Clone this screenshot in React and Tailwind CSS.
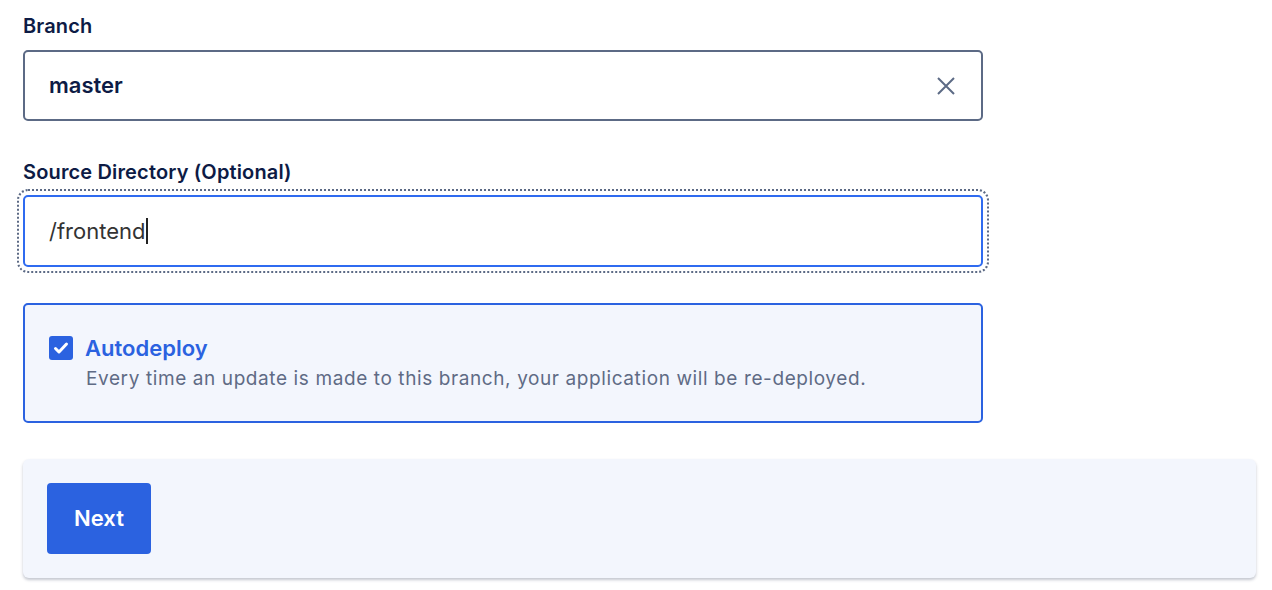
import React from 'react';

export default function App() {
  return (
    <div className="bg-white w-[1272px] h-[590px] px-[23px] pt-[12px] font-['Inter',sans-serif]">
      <div className="w-[960px]">
        <label className="block text-[20px] font-semibold text-[#0d1b45] leading-[28px] tracking-[0.15px] mb-[10px]">Branch</label>
        <div className="h-[71px] border-2 border-[#5c6a85] rounded-[5px] flex items-center pl-[24px] pr-[24px]">
          <span className="flex-1 text-[22px] font-semibold text-[#0d1b45]">master</span>
          <svg width="22" height="22" viewBox="0 0 22 22" fill="none" stroke="#5c6a85" strokeWidth="2">
            <path d="M3 3L19 19M19 3L3 19" />
          </svg>
        </div>

        <label className="block text-[20px] font-semibold text-[#0d1b45] leading-[28px] tracking-[0.15px] mt-[37px] mb-[9px]">Source Directory (Optional)</label>
        <div className="outline-2 outline-dotted outline-[#5c6a85] outline-offset-[4px] rounded-[5px]">
          <div className="h-[72px] border-2 border-[#2f6bf0] rounded-[5px] flex items-center pl-[24px]">
            <span className="text-[22px] text-[#333333]">/frontend</span>
            <span className="w-[2px] h-[26px] bg-[#222] ml-[1px]"></span>
          </div>
        </div>

        <div className="mt-[36px] h-[120px] bg-[#f3f6fd] border-2 border-[#2b62e0] rounded-[5px] pl-[24px] pt-[29px]">
          <div className="flex items-center gap-[12px]">
            <div className="w-[24px] h-[24px] bg-[#2b62e0] rounded-[3px] flex items-center justify-center">
              <svg width="16" height="16" viewBox="0 0 16 16" fill="none" stroke="white" strokeWidth="3" strokeLinecap="round" strokeLinejoin="round">
                <path d="M2.5 8.5L6 12L13.5 4" />
              </svg>
            </div>
            <span className="text-[22px] font-semibold text-[#2b62e0] leading-[28px]">Autodeploy</span>
          </div>
          <p className="ml-[37px] mt-[4px] text-[19px] text-[#5f6b85] leading-[26px] tracking-[0.6px]">Every time an update is made to this branch, your application will be re-deployed.</p>
        </div>
      </div>

      <div className="mt-[36px] w-[1233px] h-[119px] bg-[#f3f6fd] rounded-[6px] shadow-[0_2px_3px_rgba(60,70,100,0.3)] p-[24px]">
        <button className="w-[104px] h-[71px] bg-[#2b62e0] rounded-[4px] text-white text-[22px] font-semibold">Next</button>
      </div>
    </div>
  );
}
